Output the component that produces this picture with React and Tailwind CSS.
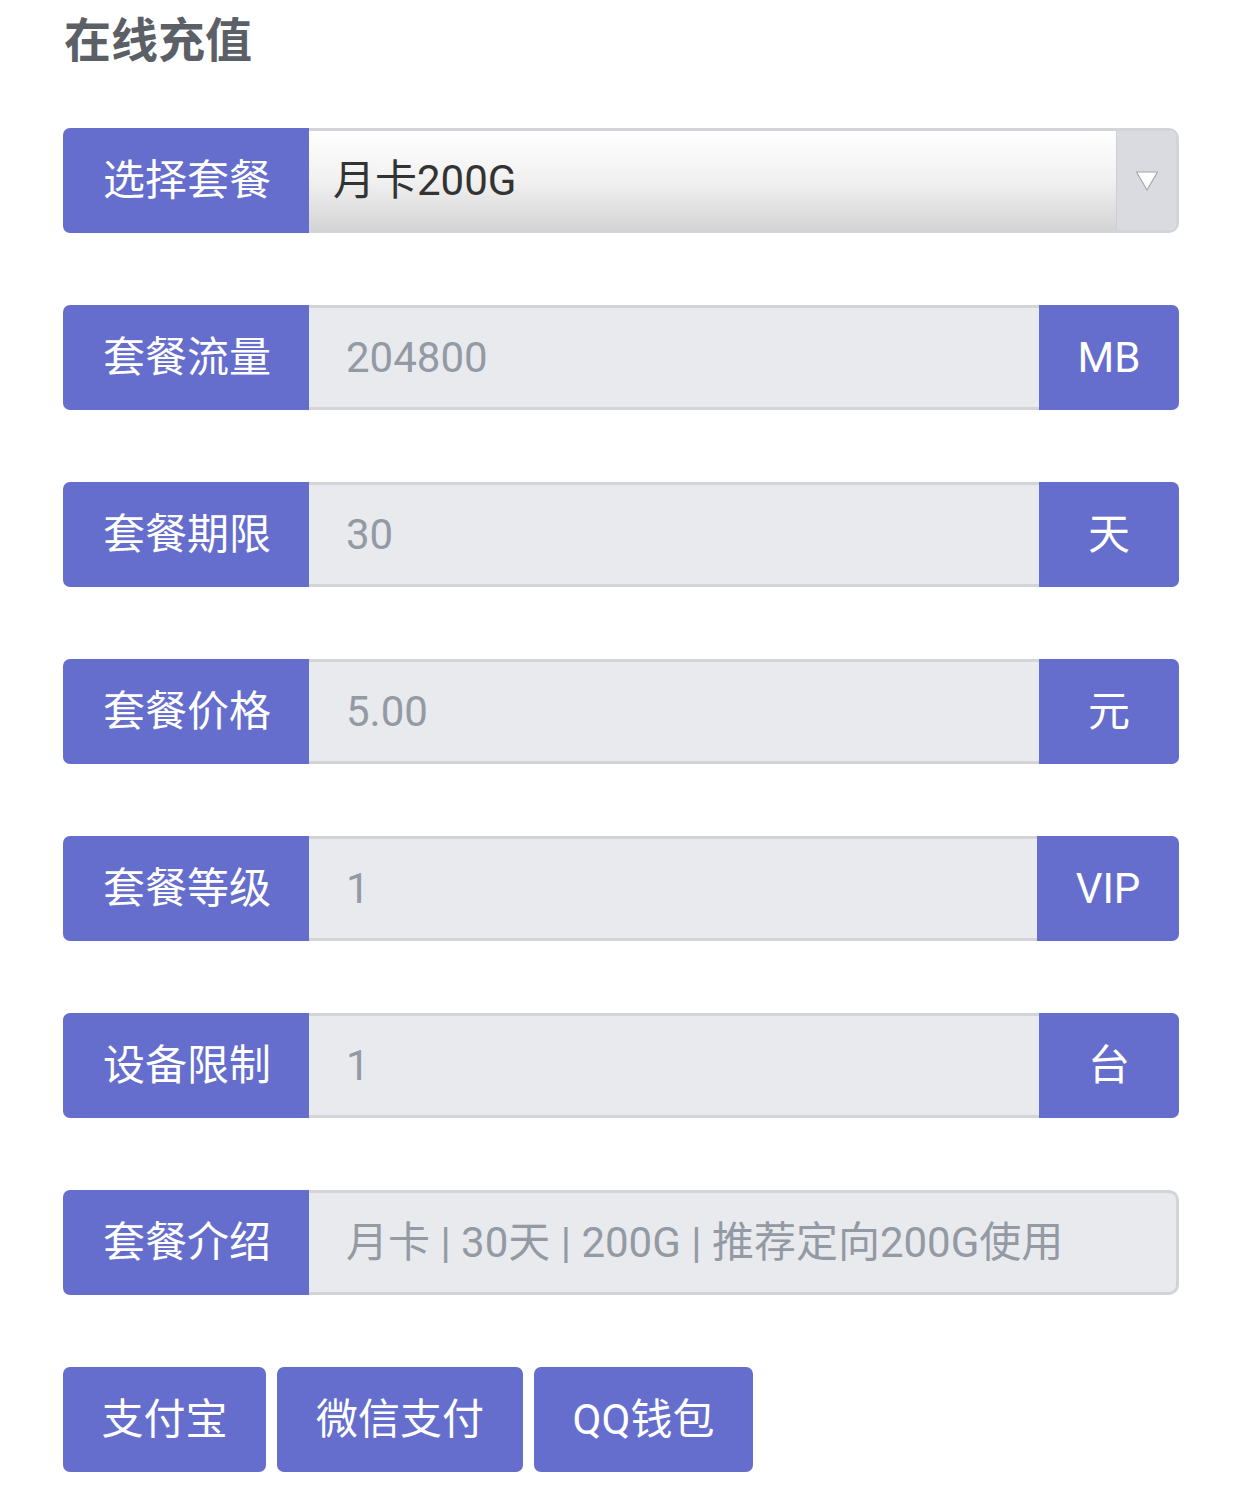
import React from 'react';

const rows = [
    { label: '套餐流量', value: '204800', unit: 'MB' },
    { label: '套餐期限', value: '30', unit: '天' },
    { label: '套餐价格', value: '5.00', unit: '元' },
    { label: '套餐等级', value: '1', unit: 'VIP' },
    { label: '设备限制', value: '1', unit: '台' },
];

const font = { fontFamily: 'Roboto, "Noto Sans CJK SC", sans-serif' };

function Label({ children }) {
    return (
        <div className="w-[246px] shrink-0 bg-[#656ecd] text-white text-[42px] flex items-center pl-[40px] rounded-l-[7px]">
            {children}
        </div>
    );
}

export default function App() {
    return (
        <div className="bg-white w-[1242px] min-h-[1501px] pl-[63px] pr-[63px] pt-[13px]" style={font}>
            <h1 className="text-[47px] leading-[56px] font-bold text-[#5b6067] pl-[1px]">在线充值</h1>

            <div className="mt-[59px] flex flex-col gap-[72px]">
                <div className="flex h-[105px]">
                    <Label>选择套餐</Label>
                    <div className="flex-1 flex border-y-[3px] border-r-[3px] border-[#d2d4d8] rounded-r-[10px] overflow-hidden">
                        <div className="flex-1 flex items-center pl-[24px] text-[42px] text-[#333333] bg-gradient-to-b from-[#ffffff] via-[#f1f1f1] to-[#d4d4d4]">
                            月卡200G
                        </div>
                        <div className="w-[60px] bg-[#d9dbe0] border-l border-[#cdd0d5] flex items-center justify-center">
                            <svg width="24" height="22" viewBox="0 0 24 22">
                                <path d="M1.5 2 L22.5 2 L12 20 Z" fill="#ffffff" stroke="#a3a6ac" strokeWidth="1.2" strokeLinejoin="round" />
                            </svg>
                        </div>
                    </div>
                </div>

                {rows.map((r) => (
                    <div key={r.label} className="flex h-[105px]">
                        <Label>{r.label}</Label>
                        <div className="flex-1 flex items-center pl-[37px] bg-[#e9eaee] border-y-[3px] border-[#d2d4d8] text-[42px] text-[#939aa3]">
                            {r.value}
                        </div>
                        <div
                            className={
                                (r.unit === 'VIP' ? 'w-[142px]' : 'w-[140px]') +
                                ' shrink-0 bg-[#656ecd] text-white text-[42px] flex items-center justify-center rounded-r-[7px]'
                            }
                        >
                            {r.unit}
                        </div>
                    </div>
                ))}

                <div className="flex h-[105px]">
                    <Label>套餐介绍</Label>
                    <div className="flex-1 flex items-center pl-[37px] bg-[#e9eaee] border-y-[3px] border-r-[3px] border-[#d2d4d8] rounded-r-[10px] text-[42px] text-[#939aa3]">
                        月卡 | 30天 | 200G | 推荐定向200G使用
                    </div>
                </div>

                <div className="flex gap-[11px] h-[105px]">
                    <button className="w-[203px] bg-[#656ecd] text-white text-[42px] rounded-[7px]">支付宝</button>
                    <button className="w-[246px] bg-[#656ecd] text-white text-[42px] rounded-[7px]">微信支付</button>
                    <button className="w-[219px] bg-[#656ecd] text-white text-[42px] rounded-[7px]">QQ钱包</button>
                </div>
            </div>
        </div>
    );
}
